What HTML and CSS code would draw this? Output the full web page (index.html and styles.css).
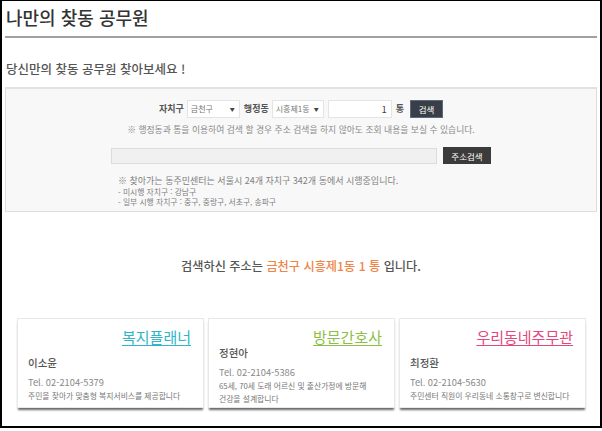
FILE: index.html
```html
<!DOCTYPE html>
<html lang="ko">
<head>
<meta charset="utf-8">
<title>나만의 찾동 공무원</title>
<link rel="stylesheet" href="styles.css">
</head>
<body>
<div class="frame">
  <h1 class="title">나만의 찾동 공무원</h1>
  <h2 class="subtitle">당신만의 찾동 공무원 찾아보세요 !</h2>

  <section class="search-box">
    <div class="row row-select">
      <span class="label">자치구</span>
      <div class="select sel-gu"><span>금천구</span><span class="arrow">▼</span></div>
      <span class="label">행정동</span>
      <div class="select sel-dong"><span>시흥제1동</span><span class="arrow">▼</span></div>
      <div class="input-num">1</div>
      <span class="label">통</span>
      <button class="btn btn-search">검색</button>
    </div>
    <p class="note-center">※ 행정동과 통을 이용하여 검색 할 경우 주소 검색을 하지 않아도 조회 내용을 보실 수 있습니다.</p>
    <div class="row row-addr">
      <div class="input-addr"></div>
      <button class="btn btn-addr">주소검색</button>
    </div>
    <div class="notes">
      <p class="note-main">※ 찾아가는 동주민센터는 서울시 24개 자치구 342개 동에서 시행중입니다.</p>
      <p class="note-sub">- 미시행 자치구 : 강남구</p>
      <p class="note-sub">- 일부 시행 자치구 : 중구, 중랑구, 서초구, 송파구</p>
    </div>
  </section>

  <p class="result">검색하신 주소는 <span class="hl">금천구 시흥제1동 1 통</span> 입니다.</p>

  <div class="cards">
    <div class="card">
      <div class="card-title c-teal">복지플래너</div>
      <div class="card-body">
        <div class="name">이소윤</div>
        <div class="tel">Tel. 02-2104-5379</div>
        <div class="desc">주민을 찾아가 맞춤형 복지서비스를 제공합니다</div>
      </div>
    </div>
    <div class="card">
      <div class="card-title c-green">방문간호사</div>
      <div class="card-body">
        <div class="name">정현아</div>
        <div class="tel">Tel. 02-2104-5386</div>
        <div class="desc">65세, 70세 도래 어르신 및 출산가정에 방문해<br>건강을 설계합니다</div>
      </div>
    </div>
    <div class="card">
      <div class="card-title c-pink">우리동네주무관</div>
      <div class="card-body">
        <div class="name">최정환</div>
        <div class="tel">Tel. 02-2104-5630</div>
        <div class="desc">주민센터 직원이 우리동네 소통창구로 변신합니다</div>
      </div>
    </div>
  </div>
</div>
</body>
</html>
```

FILE: styles.css
```css
* { box-sizing: border-box; }
html, body { margin: 0; padding: 0; background: #fff; }
body {
  font-family: "Noto Sans CJK KR", "Noto Sans", sans-serif;
  color: #555;
}
.frame {
  width: 602px;
  height: 428px;
  border-style: solid;
  border-color: #000;
  border-width: 1px 2px 2px 2px;
  padding: 0 3px;
  overflow: hidden;
}
.title {
  margin: 0;
  padding: 3px 0 0 1px;
  height: 37px;
  font-size: 18px;
  line-height: 26px;
  font-weight: 500;
  color: #333;
  border-bottom: 2px solid #a0a0a0;
}
.subtitle {
  margin: 0;
  padding: 22px 0 0 1px;
  height: 49px;
  font-size: 12.5px;
  line-height: 18px;
  font-weight: 500;
  color: #555;
}
.search-box {
  background: #f8f8f8;
  border: 1px solid #dedede;
  border-top: 2px solid #e2e2e2;
  height: 125px;
  padding-top: 10px;
}
.row {
  display: flex;
  justify-content: center;
  align-items: center;
}
.row-select { height: 19px; }
.label {
  font-size: 9px;
  font-weight: 700;
  color: #555;
}
.select {
  display: flex;
  justify-content: space-between;
  align-items: center;
  height: 18px;
  background: #fff;
  border: 1px solid #e4e4e4;
  font-size: 8px;
  color: #777;
  padding: 0 4px 0 3px;
}
.sel-gu { width: 53px; margin: 0 4px 0 3px; }
.sel-dong { width: 52px; margin: 0 4px 0 3px; }
.arrow { font-size: 5px; color: #444; }
.input-num {
  width: 64px;
  height: 18px;
  background: #fff;
  border: 1px solid #e4e4e4;
  font-size: 9.5px;
  line-height: 16px;
  text-align: right;
  padding-right: 4px;
  color: #444;
  margin-right: 4px;
}
.btn {
  border: 0;
  font-family: inherit;
  color: #fff;
  padding: 0;
  font-size: 8.5px;
}
.btn-search {
  width: 33px;
  height: 18px;
  margin-left: 6px;
  background: #3a3f47;
  border: 1px solid #5a6a80;
}
.note-center {
  margin: 6px 0 0;
  text-align: center;
  font-size: 8.8px;
  line-height: 12px;
  color: #8a8a8a;
}
.row-addr { margin-top: 11px; gap: 6px; }
.input-addr {
  width: 326px;
  height: 16px;
  background: #f0f0f0;
  border: 1px solid #dcdcdc;
}
.btn-addr {
  width: 48px;
  height: 17px;
  background: #3b3b3b;
  font-size: 8.5px;
}
.notes {
  margin: 11px 0 0 112px;
}
.notes p { margin: 0; color: #808080; }
.note-main { font-size: 9px; line-height: 12px; }
.note-sub { font-size: 7.8px; line-height: 9.5px; }
.result {
  margin: 45px 0 0;
  text-align: center;
  font-size: 12.2px;
  line-height: 18px;
  font-weight: 500;
  color: #555;
}
.hl { color: #f08548; }
.cards {
  display: flex;
  gap: 4px;
  margin: 43px 0 0 12px;
}
.card {
  width: 187px;
  height: 90px;
  background: #fff;
  border: 1px solid #e8e8e8;
  box-shadow: 0 3px 2px -1px rgba(0, 0, 0, 0.6);
  display: flex;
  flex-direction: column;
  padding: 8px 12px 5px 10px;
}
.card-title {
  align-self: flex-end;
  font-size: 15px;
  line-height: 19px;
  text-decoration: underline;
  text-underline-offset: 2px;
  text-decoration-thickness: 1px;
}
.c-teal { color: #2eb5c7; }
.c-green { color: #8cbf45; }
.c-pink { color: #e4477c; }
.card-body { margin-top: auto; }
.name {
  font-size: 10.5px;
  font-weight: 500;
  line-height: 14px;
  color: #555;
  margin-bottom: 6px;
}
.tel {
  font-size: 9.3px;
  line-height: 13px;
  color: #888;
}
.desc {
  font-size: 7.8px;
  line-height: 13px;
  color: #777;
}
```
